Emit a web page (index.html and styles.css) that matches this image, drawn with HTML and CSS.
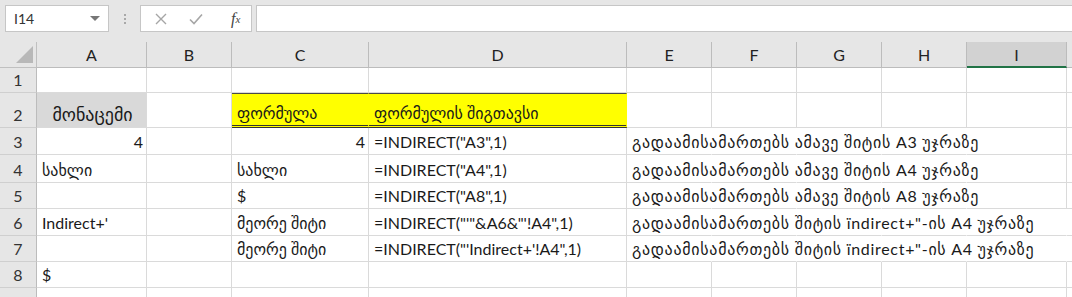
FILE: index.html
```html
<!DOCTYPE html>
<html lang="ka">
<head>
  <meta charset="UTF-8">
  <title>INDIRECT</title>
  <link rel="stylesheet" href="styles.css">
</head>
<body>
  <!-- Formula bar -->
  <div class="toolbar">
    <div class="name-box">
      <span>I14</span>
      <span class="caret"></span>
    </div>
    <div class="grip"><i></i><i></i><i></i></div>
    <div class="fx-buttons">
      <span class="fx-btn">
        <svg width="12" height="12" viewBox="0 0 12 12"><path d="M1 1 L11 11 M11 1 L1 11" stroke="#a6a6a6" stroke-width="1.4" fill="none"/></svg>
      </span>
      <span class="fx-btn">
        <svg width="14" height="12" viewBox="0 0 14 12"><path d="M1 6.5 L5 10.5 L13 1.5" stroke="#a6a6a6" stroke-width="1.6" fill="none"/></svg>
      </span>
      <span class="fx-btn fx"><em>f</em><sub>x</sub></span>
    </div>
    <div class="formula-input"></div>
  </div>

  <!-- Sheet -->
  <div class="sheet">
    <div class="row">
      <div class="corner"><svg width="18" height="18" viewBox="0 0 18 18"><polygon points="17,0 17,17 0,17" fill="#b8b8b8"/></svg></div>
      <div class="col-head">A</div>
      <div class="col-head">B</div>
      <div class="col-head">C</div>
      <div class="col-head">D</div>
      <div class="col-head">E</div>
      <div class="col-head">F</div>
      <div class="col-head">G</div>
      <div class="col-head">H</div>
      <div class="col-head selected">I</div>
      <div class="col-head"></div>
    </div>

    <div class="row">
      <div class="row-head">1</div>
      <div class="cell"></div><div class="cell"></div><div class="cell"></div><div class="cell"></div>
      <div class="cell"></div><div class="cell"></div><div class="cell"></div><div class="cell"></div>
      <div class="cell"></div><div class="cell"></div>
    </div>

    <div class="row">
      <div class="row-head">2</div>
      <div class="cell shaded center wide">მონაცემი</div>
      <div class="cell"></div>
      <div class="cell header-cell">ფორმულა</div>
      <div class="cell header-cell">ფორმულის შიგთავსი</div>
      <div class="cell"></div><div class="cell"></div><div class="cell"></div><div class="cell"></div>
      <div class="cell"></div><div class="cell"></div>
    </div>

    <div class="row">
      <div class="row-head">3</div>
      <div class="cell num">4</div>
      <div class="cell"></div>
      <div class="cell num">4</div>
      <div class="cell">=INDIRECT("A3",1)</div>
      <div class="cell overflow">გადაამისამართებს ამავე შიტის A3 უჯრაზე</div>
      <div class="cell hidden"></div><div class="cell hidden"></div><div class="cell hidden"></div>
      <div class="cell"></div><div class="cell"></div>
    </div>

    <div class="row">
      <div class="row-head">4</div>
      <div class="cell">სახლი</div>
      <div class="cell"></div>
      <div class="cell">სახლი</div>
      <div class="cell">=INDIRECT("A4",1)</div>
      <div class="cell overflow">გადაამისამართებს ამავე შიტის A4 უჯრაზე</div>
      <div class="cell hidden"></div><div class="cell hidden"></div><div class="cell hidden"></div>
      <div class="cell"></div><div class="cell"></div>
    </div>

    <div class="row">
      <div class="row-head">5</div>
      <div class="cell"></div>
      <div class="cell"></div>
      <div class="cell">$</div>
      <div class="cell">=INDIRECT("A8",1)</div>
      <div class="cell overflow">გადაამისამართებს ამავე შიტის A8 უჯრაზე</div>
      <div class="cell hidden"></div><div class="cell hidden"></div><div class="cell hidden"></div>
      <div class="cell"></div><div class="cell"></div>
    </div>

    <div class="row">
      <div class="row-head">6</div>
      <div class="cell">Indirect+'</div>
      <div class="cell"></div>
      <div class="cell">მეორე შიტი</div>
      <div class="cell">=INDIRECT("'"&amp;A6&amp;"'!A4",1)</div>
      <div class="cell overflow">გადაამისამართებს შიტის ïndirect+"-ის A4 უჯრაზე</div>
      <div class="cell hidden"></div><div class="cell hidden"></div><div class="cell hidden"></div>
      <div class="cell hidden"></div><div class="cell"></div>
    </div>

    <div class="row">
      <div class="row-head">7</div>
      <div class="cell"></div>
      <div class="cell"></div>
      <div class="cell">მეორე შიტი</div>
      <div class="cell">=INDIRECT("'Indirect+'!A4",1)</div>
      <div class="cell overflow">გადაამისამართებს შიტის ïndirect+"-ის A4 უჯრაზე</div>
      <div class="cell hidden"></div><div class="cell hidden"></div><div class="cell hidden"></div>
      <div class="cell hidden"></div><div class="cell"></div>
    </div>

    <div class="row">
      <div class="row-head">8</div>
      <div class="cell">$</div>
      <div class="cell"></div><div class="cell"></div><div class="cell"></div>
      <div class="cell"></div><div class="cell"></div><div class="cell"></div><div class="cell"></div>
      <div class="cell"></div><div class="cell"></div>
    </div>

    <div class="row">
      <div class="row-head"></div>
      <div class="cell"></div><div class="cell"></div><div class="cell"></div><div class="cell"></div>
      <div class="cell"></div><div class="cell"></div><div class="cell"></div><div class="cell"></div>
      <div class="cell"></div><div class="cell"></div>
    </div>
  </div>
</body>
</html>
```

FILE: styles.css
```css
* {
  margin: 0;
  padding: 0;
  box-sizing: border-box;
}
body {
  background-color: #e6e6e6;
  font-family: Lato, "DejaVu Sans", sans-serif;
  color: #1a1a1a;
  overflow: hidden;
}

/* Formula bar */
.toolbar {
  display: flex;
  align-items: flex-start;
  height: 42px;
  padding: 5px 0 10px 5px;
}
.name-box {
  display: flex;
  align-items: center;
  justify-content: space-between;
  width: 104px;
  height: 27px;
  padding: 0 8px 0 8px;
  background-color: #fff;
  border: 1px solid #c6c6c6;
  font-size: 14px;
  color: #333;
}
.caret {
  width: 0;
  height: 0;
  border-left: 5px solid transparent;
  border-right: 5px solid transparent;
  border-top: 5px solid #777;
}
.grip {
  display: flex;
  flex-direction: column;
  gap: 2px;
  width: 31px;
  height: 27px;
  align-items: center;
  justify-content: center;
}
.grip i {
  display: block;
  width: 2px;
  height: 2px;
  background-color: #a8a8a8;
}
.fx-buttons {
  display: flex;
  align-items: center;
  width: 112px;
  height: 27px;
  background-color: #fff;
  border: 1px solid #c6c6c6;
  padding-left: 14px;
  gap: 22px;
}
.fx-btn {
  display: flex;
  align-items: center;
}
.fx {
  font-family: "Liberation Serif", serif;
  font-size: 16px;
  color: #444;
  margin-left: 6px;
}
.fx sub {
  font-size: 11px;
  font-style: italic;
  vertical-align: -1px;
}
.formula-input {
  flex: 1;
  height: 27px;
  margin-left: 4px;
  background-color: #fff;
  border: 1px solid #c6c6c6;
  border-right: none;
}

/* Sheet grid */
.sheet {
  display: grid;
  grid-template-columns: 37px 110px 85px 137px 258px 85px 85px 85px 85px 100px 1fr;
  grid-template-rows: 26px 25px 35px 27px 28px 26px 27px 26px 26px 26px;
  background-color: #fff;
  font-size: 16px;
}
.row {
  display: contents;
}
.corner,
.col-head,
.row-head,
.cell {
  border-right: 1px solid #dadada;
  border-bottom: 1px solid #dadada;
  white-space: nowrap;
  line-height: 21px;
}
.corner {
  background-color: #e6e6e6;
  border-color: #c0c0c0;
  display: flex;
  align-items: flex-end;
  justify-content: flex-end;
  padding: 0 2px 3px 0;
}
.col-head {
  background-color: #e6e6e6;
  border-right-color: #bcbcbc;
  border-bottom-color: #bcbcbc;
  display: flex;
  align-items: center;
  justify-content: center;
  color: #222;
}
.col-head.selected {
  background-color: #d2d2d2;
  border-bottom: 2px solid #217346;
  color: #262626;
}
.row-head {
  background-color: #e6e6e6;
  border-right-color: #bcbcbc;
  border-bottom-color: #cfcfcf;
  display: flex;
  align-items: flex-end;
  justify-content: center;
  padding-bottom: 2px;
  color: #333;
}
.cell {
  display: flex;
  align-items: flex-end;
  padding: 0 3px 2px 5px;
}
.cell.num {
  justify-content: flex-end;
}
.cell.center {
  justify-content: center;
}
.cell.wide {
  font-size: 18px;
}
.cell.shaded {
  background-color: #d9d9d9;
}
.cell.header-cell {
  background-color: #ffff00;
  border-top: 1px solid #4a4a4a;
  border-bottom: 3px double #333;
  border-right-color: #ffff00;
}
.cell.overflow {
  overflow: visible;
  border-right-color: transparent;
  position: relative;
  z-index: 1;
  letter-spacing: 0.7px;
}
.cell.hidden {
  border-right-color: transparent;
}
```
